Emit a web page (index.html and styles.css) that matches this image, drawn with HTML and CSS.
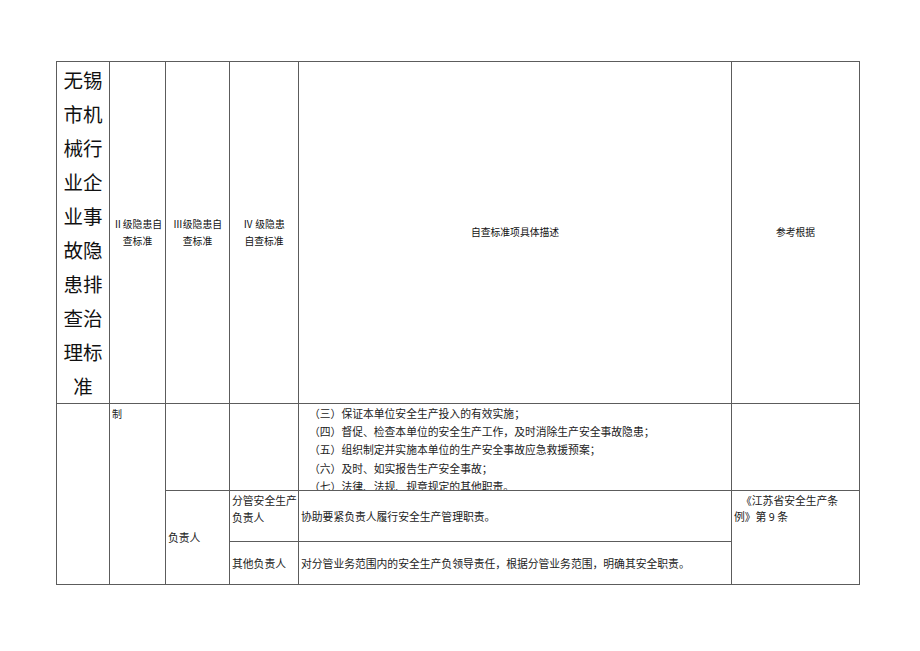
FILE: index.html
```html
<!DOCTYPE html>
<html lang="zh">
<head>
<meta charset="utf-8">
<link rel="stylesheet" href="styles.css">
</head>
<body>
<table class="grid">
  <colgroup>
    <col class="c1"><col class="c2"><col class="c3"><col class="c4"><col class="c5"><col class="c6">
  </colgroup>
  <tr class="r-head">
    <td class="title"><div class="title-text">无锡市机械行业企业事故隐患排查治理标准</div></td>
    <td class="head">Ⅱ级隐患自<br>查标准</td>
    <td class="head">Ⅲ级隐患自<br>查标准</td>
    <td class="head">Ⅳ 级隐患<br>自查标准</td>
    <td class="head">自查标准项具体描述</td>
    <td class="head">参考根据</td>
  </tr>
  <tr class="r-a">
    <td rowspan="3"></td>
    <td rowspan="3" class="top small">制</td>
    <td></td>
    <td></td>
    <td class="list-cell">
      <div class="clip">
        <p>（三）保证本单位安全生产投入的有效实施；</p>
        <p>（四）督促、检查本单位的安全生产工作，及时消除生产安全事故隐患；</p>
        <p>（五）组织制定并实施本单位的生产安全事故应急救援预案；</p>
        <p>（六）及时、如实报告生产安全事故；</p>
        <p>（七）法律、法规、规章规定的其他职责。</p>
      </div>
    </td>
    <td></td>
  </tr>
  <tr class="r-b">
    <td rowspan="2" class="mid">负责人</td>
    <td class="top role">分管安全生产<br>负责人</td>
    <td class="mid">协助要紧负责人履行安全生产管理职责。</td>
    <td rowspan="2" class="top ref"><span class="indent"></span>《江苏省安全生产条<br>例》第 9 条</td>
  </tr>
  <tr class="r-c">
    <td class="mid">其他负责人</td>
    <td class="mid">对分管业务范围内的安全生产负领导责任，根据分管业务范围，明确其安全职责。</td>
  </tr>
</table>
</body>
</html>
```

FILE: styles.css
```css
html, body {
  margin: 0;
  padding: 0;
  background: #ffffff;
}

body {
  padding: 61px 0 0 56px;
  font-family: "Noto Sans CJK SC", "Noto Sans", sans-serif;
  color: #222;
}

.grid {
  border-collapse: collapse;
  table-layout: fixed;
  width: 804px;
}

.grid td {
  border: 1px solid #5c5c5c;
  padding: 0 2px;
  font-size: 10.8px;
  line-height: 17px;
  vertical-align: middle;
  overflow: hidden;
}

.c1 { width: 53px; }
.c2 { width: 56px; }
.c3 { width: 64px; }
.c4 { width: 69px; }
.c5 { width: 433px; }
.c6 { width: 128px; }

.r-head { height: 342px; }
.r-a { height: 86px; }
.r-b { height: 51px; }
.r-c { height: 43px; }

.title {
  text-align: center;
}

.title-text {
  width: 40px;
  margin: 0 auto;
  font-size: 19.5px;
  line-height: 34px;
  color: #111;
}

.grid td.head {
  text-align: center;
  padding: 0 1px;
  font-size: 9.8px;
  line-height: 17px;
  color: #111;
}

.grid td.top {
  vertical-align: top;
}

.grid td.small {
  padding-top: 3px;
  font-size: 10px;
  line-height: 14px;
}

.grid td.role {
  padding-top: 1px;
  line-height: 17px;
  white-space: nowrap;
}

.grid td.list-cell {
  vertical-align: top;
  padding: 0 0 0 10px;
}

.clip {
  height: 86px;
  overflow: hidden;
}

.clip p {
  margin: 0;
  line-height: 18.2px;
  font-size: 10.8px;
  white-space: nowrap;
}

.grid td.ref {
  padding-top: 1px;
  line-height: 16px;
}

.indent {
  display: inline-block;
  width: 7px;
}
```
